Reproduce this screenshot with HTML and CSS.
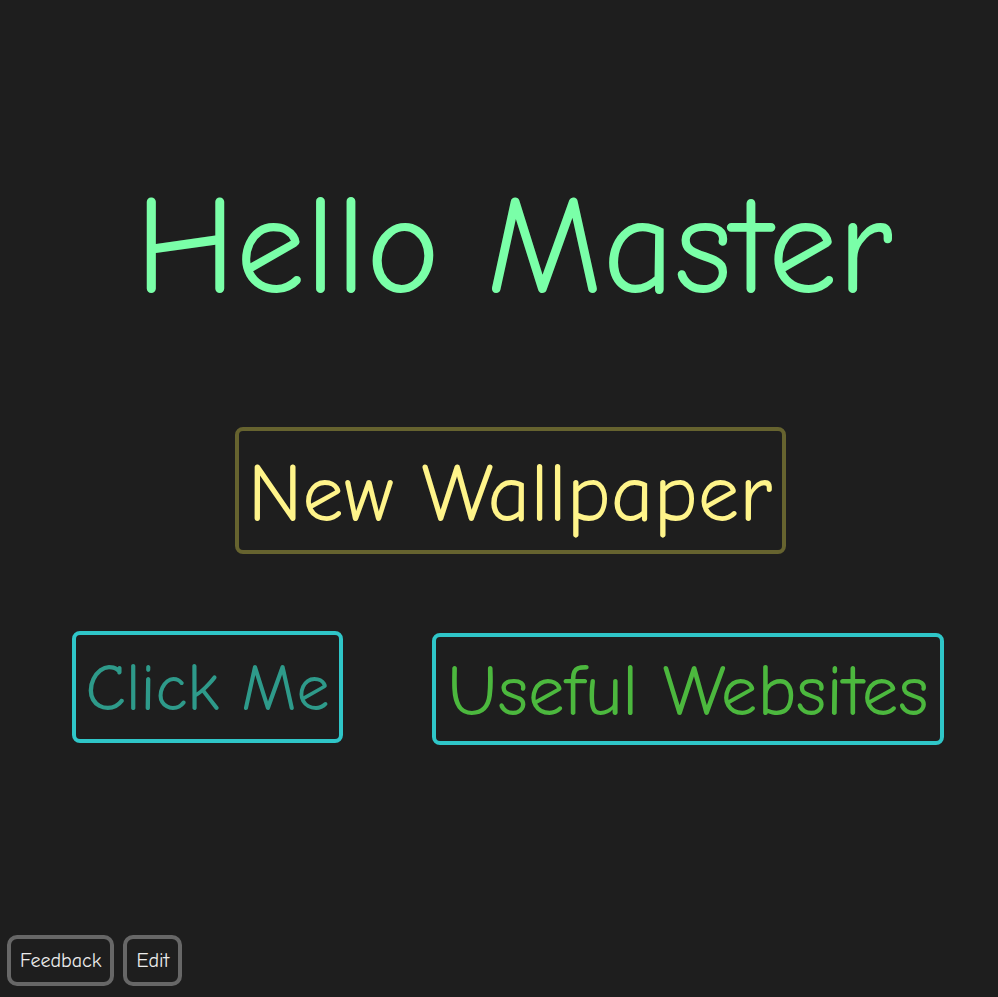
FILE: index.html
```html
<!DOCTYPE html>
<html lang="en">
<head>
<meta charset="utf-8">
<title>Hello Master</title>
<link rel="stylesheet" href="styles.css">
</head>
<body>
<div class="page">
  <main class="main">
    <h1 class="title">Hello Master</h1>
    <button class="btn btn-wallpaper">New Wallpaper</button>
    <div class="row">
      <button class="btn btn-click">Click Me</button>
      <button class="btn btn-sites">Useful Websites</button>
    </div>
  </main>
  <footer class="footer">
    <button class="small-btn">Feedback</button>
    <button class="small-btn">Edit</button>
  </footer>
</div>
</body>
</html>
```
FILE: styles.css
```css
html, body {
  margin: 0;
  padding: 0;
  background: #1e1e1e;
}
.page {
  height: 997px;
  display: flex;
  flex-direction: column;
  font-family: "Comic Sans MS", "Comic Neue", "Open Sans", sans-serif;
}
.main {
  display: flex;
  flex-direction: column;
  align-items: center;
  padding-left: 18px;
}
.title {
  margin: 167px 0 0 0;
  font-size: 139px;
  line-height: 160px;
  font-weight: normal;
  color: #7affa8;
  letter-spacing: 0;
  padding-left: 12px;
}
.btn {
  box-sizing: border-box;
  background: transparent;
  border-radius: 8px;
  border: 4px solid;
  font-family: inherit;
  display: flex;
  align-items: center;
  justify-content: center;
  padding: 0;
  white-space: nowrap;
}
.btn-wallpaper {
  margin-top: 100px;
  width: 551px;
  height: 127px;
  border-color: #66632f;
  color: #fff48a;
  font-size: 83px;
  margin-left: 4px;
  padding-top: 6px;
}
.row {
  margin-top: 77px;
  display: flex;
  align-items: flex-start;
  gap: 89px;
}
.btn-click {
  width: 271px;
  height: 112px;
  border-color: #2fc6c8;
  color: #2e9a8a;
  font-size: 66px;
  padding-top: 4px;
}
.btn-sites {
  margin-top: 2px;
  width: 512px;
  height: 112px;
  border-color: #2fc6c8;
  color: #4cb83e;
  font-size: 73px;
  padding-top: 4px;
}
.footer {
  margin-top: auto;
  display: flex;
  gap: 9px;
  padding: 0 0 11px 7px;
}
.small-btn {
  box-sizing: border-box;
  height: 51px;
  padding: 0 9px;
  background: transparent;
  border: 4px solid #676767;
  border-radius: 10px;
  color: #ececec;
  font-family: inherit;
  font-size: 20px;
}
```
